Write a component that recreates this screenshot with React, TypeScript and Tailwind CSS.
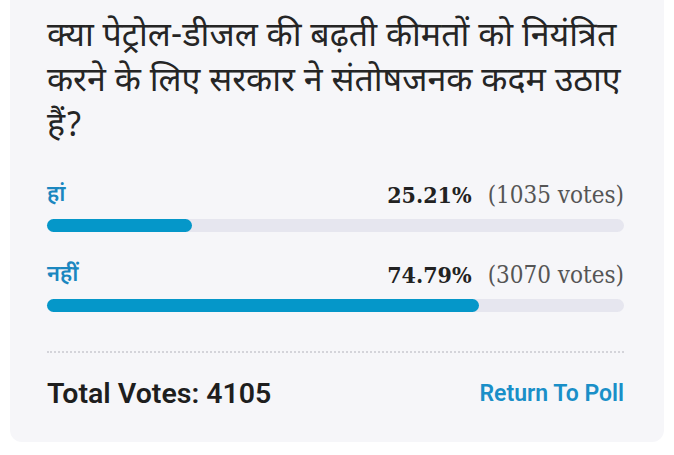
import React from "react";

const options = [
  { label: "हां", pct: 25.21, votes: 1035 },
  { label: "नहीं", pct: 74.79, votes: 3070 },
];

export default function App() {
  return (
    <div className="w-[674px] h-[455px] bg-white">
      <div className="mx-[10px] h-[442px] bg-[#f6f6f9] rounded-b-[12px] pl-[37px] pr-[40px] pt-[16px]">
        <h1
          className="text-[34px] leading-[45px] text-[#252525] font-normal"
          style={{ fontFamily: '"Noto Sans Devanagari", "Lohit Devanagari", "Noto Sans", sans-serif' }}
        >
          क्या पेट्रोल-डीजल की बढ़ती कीमतों को नियंत्रित करने के लिए सरकार ने संतोषजनक कदम उठाए हैं?
        </h1>
        <div className="mt-[22px] flex flex-col gap-[21px]">
          {options.map((o) => (
            <div key={o.label}>
              <div className="flex items-end justify-between h-[34px]">
                <span
                  className="text-[22px] text-[#1b87c0] font-semibold leading-none"
                  style={{ fontFamily: '"Noto Sans Devanagari", "Lohit Devanagari", "Noto Sans", sans-serif' }}
                >
                  {o.label}
                </span>
                <span className="leading-none text-[#222]" style={{ fontFamily: '"DejaVu Serif Condensed", "Liberation Serif", serif' }}>
                  <span className="font-bold text-[23px]">{o.pct.toFixed(2)}%</span>
                  <span className="ml-[16px] text-[24px] text-[#555]">({o.votes} votes)</span>
                </span>
              </div>
              <div className="mt-[12px] h-[13px] rounded-full bg-[#e6e6ef]">
                <div className="h-full rounded-full bg-[#0597c9]" style={{ width: `${o.pct}%` }} />
              </div>
            </div>
          ))}
        </div>
        <div className="mt-[39px] border-t-2 border-dotted border-[#d4d4da]" />
        <div className="mt-[20px] flex items-center justify-between">
          <span className="text-[28.5px] font-semibold text-[#1e1e1e]" style={{ fontFamily: 'Roboto, "Liberation Sans", sans-serif' }}>
            Total Votes: 4105
          </span>
          <span className="text-[23px] font-semibold text-[#1a8fc8]" style={{ fontFamily: 'Roboto, "Liberation Sans", sans-serif' }}>
            Return To Poll
          </span>
        </div>
      </div>
    </div>
  );
}
